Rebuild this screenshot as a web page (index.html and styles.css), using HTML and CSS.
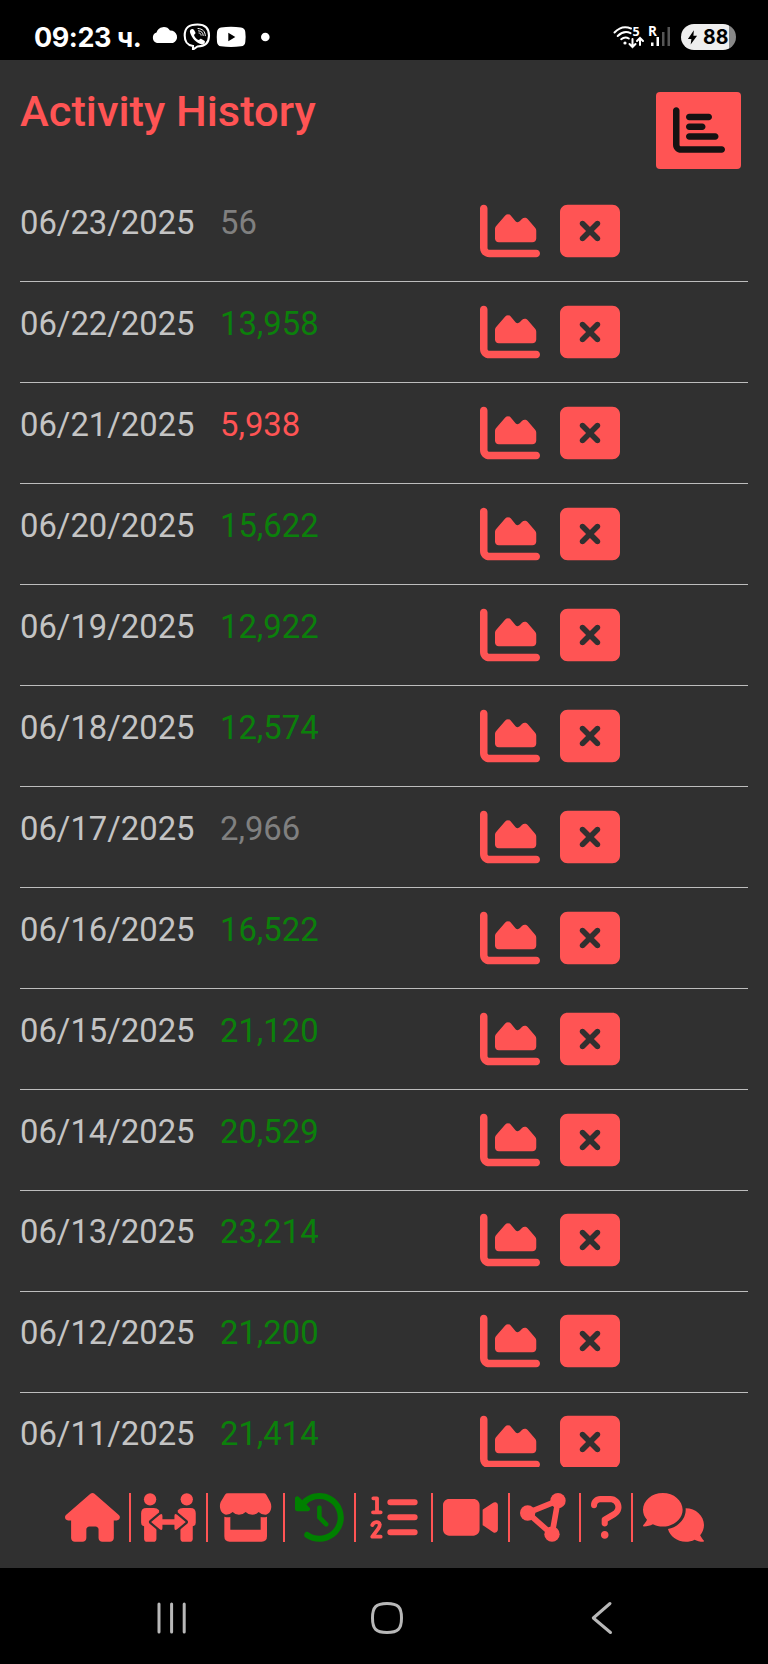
FILE: index.html
```html
<!DOCTYPE html>
<html lang="en">
<head>
<meta charset="utf-8">
<title>Activity History</title>
<link rel="stylesheet" href="styles.css">
</head>
<body>
<svg class="defs" aria-hidden="true">
  <symbol id="area" viewBox="0 0 512 512"><path d="M64 64c0-17.7-14.3-32-32-32S0 46.3 0 64V400c0 44.2 35.8 80 80 80H480c17.7 0 32-14.3 32-32s-14.3-32-32-32H80c-8.8 0-16-7.2-16-16V64zm96 288H448c17.7 0 32-14.3 32-32V251.800c0-7.600-2.700-15-7.700-20.800l-65.800-76.800c-12.100-14.200-33.700-15-46.900-1.800l-21 21c-10 10-26.400 9.200-35.400-1.600l-39.200-47c-12.600-15.100-35.700-15.400-48.700-.6L135.900 215c-5.100 5.800-7.900 13.300-7.900 21.100v84c0 17.700 14.300 32 32 32z"/></symbol>
  <symbol id="close" viewBox="0 0 512 512"><path d="M64 32C28.700 32 0 60.700 0 96V416c0 35.300 28.700 64 64 64H448c35.300 0 64-28.700 64-64V96c0-35.300-28.700-64-64-64H64zM175 175c9.400-9.400 24.600-9.400 33.900 0l47 47 47-47c9.400-9.400 24.600-9.400 33.900 0s9.400 24.600 0 33.900l-47 47 47 47c9.400 9.400 9.400 24.600 0 33.900s-24.600 9.400-33.900 0l-47-47-47 47c-9.400 9.400-24.600 9.400-33.900 0s-9.400-24.600 0-33.900l47-47-47-47c-9.400-9.400-9.400-24.600 0-33.900z"/></symbol>
</svg>
<header class="status">
  <span class="clock">09:23 ч.</span>
  <svg class="status-left" viewBox="0 0 120 30">
    <path fill="#fff" d="M6 23a5.500 5.500 0 0 1-.5-10.500A7.500 7.500 0 0 1 19 10.500a6.500 6.500 0 0 1 3 12.500z"/>
    <path fill="none" stroke="#fff" stroke-width="2.100" d="M46.500 4.500c8 0 11.500 3.500 11.500 11S54.500 26.500 46.500 26.500l-4.500 3V26c-6-1-8.300-4-8.300-10.500C33.700 7.500 38 4.500 46.500 4.500z"/>
    <path fill="#fff" d="M41 9c-2 .5-2.500 2-1.800 4 2 5.600 5.500 9.300 11 11.200 1.800.6 3-.4 3.700-2 .4-1-.2-1.500-3.900-3.400-1-.5-1.500 1.300-2.500 1.200-2-.7-4-2.800-4.500-5 .2-1 2-1.300 1.400-2.600C43.500 10.500 42.500 8.700 41 9z"/>
    <path fill="none" stroke="#fff" stroke-width="1" stroke-linecap="round" d="M47 8.500c4.600.2 7.300 3 7.300 7.200M47.500 10.800c3 .2 4.600 1.900 4.700 4.700M48 13c1.400.1 2 .9 2.100 2.200"/>
    <path fill="#fff" fill-rule="evenodd" d="M70 7.500Q80 6 90 7.500Q94 8 94.300 12Q95 17 94.300 22Q94 26 90 26.300Q80 27.500 70 26.300Q66.500 26 66 22Q65.500 17 66 12Q66.500 8 70 7.500zM77.300 12.800v8.400l7-4.200z"/>
    <circle cx="114.300" cy="17" r="4.300" fill="#fff"/>
  </svg>
  <svg class="status-right" viewBox="0 0 60 30">
    <g fill="none" stroke="#fff" stroke-width="2" stroke-linecap="round">
      <path d="M1.500 12.500Q9 4.500 18 8.500M4.700 16Q11 10 17.500 13.200M8.200 19.200Q12 16 15.800 18.500"/>
      <path d="M19.500 19v8m-3-3 3 3 3-3M27 25v-7m-3 3 3-3 3 3"/>
    </g>
    <circle cx="12" cy="23" r="1.600" fill="#fff"/>
    <text class="tiny" x="19.500" y="16">5</text>
    <text class="tiny tiny-r" x="35" y="15.700">R</text>
    <path fill="#fff" d="M38 22.500h2.500V26H38zM43.500 17h2.500v9h-2.500z"/>
    <path fill="#555" d="M49 12h2.500v14H49zM54.500 7h2.500v19h-2.500z"/>
  </svg>
  <div class="battery">
    <svg class="bolt" viewBox="0 0 12 18"><path d="M7.500 1 1 10.500h3.800L4 16.500 11 7H7z"/></svg>
    <span>88</span>
  </div>
</header>
<main class="app">
  <div class="head">
    <h1>Activity History</h1>
    <button class="chart-btn" aria-label="Chart"><svg viewBox="0 0 512 512"><path d="M32 32c17.700 0 32 14.300 32 32V400c0 8.800 7.200 16 16 16H480c17.700 0 32 14.300 32 32s-14.300 32-32 32H80c-44.200 0-80-35.800-80-80V64C0 46.300 14.300 32 32 32zm96 96c0-17.700 14.300-32 32-32h192c17.700 0 32 14.300 32 32s-14.300 32-32 32H160c-17.700 0-32-14.300-32-32zm32 64H288c17.700 0 32 14.300 32 32s-14.300 32-32 32H160c-17.700 0-32-14.300-32-32s14.300-32 32-32zm0 96H416c17.700 0 32 14.300 32 32s-14.300 32-32 32H160c-17.700 0-32-14.300-32-32s14.300-32 32-32z"/></svg></button>
  </div>
  <div class="list">
    <div class="row"><span>06/23/2025</span><span class="idle">56</span><svg><use href="#area"/></svg><svg><use href="#close"/></svg></div>
    <div class="row"><span>06/22/2025</span><span class="good">13,958</span><svg><use href="#area"/></svg><svg><use href="#close"/></svg></div>
    <div class="row"><span>06/21/2025</span><span class="low">5,938</span><svg><use href="#area"/></svg><svg><use href="#close"/></svg></div>
    <div class="row"><span>06/20/2025</span><span class="good">15,622</span><svg><use href="#area"/></svg><svg><use href="#close"/></svg></div>
    <div class="row"><span>06/19/2025</span><span class="good">12,922</span><svg><use href="#area"/></svg><svg><use href="#close"/></svg></div>
    <div class="row"><span>06/18/2025</span><span class="good">12,574</span><svg><use href="#area"/></svg><svg><use href="#close"/></svg></div>
    <div class="row"><span>06/17/2025</span><span class="idle">2,966</span><svg><use href="#area"/></svg><svg><use href="#close"/></svg></div>
    <div class="row"><span>06/16/2025</span><span class="good">16,522</span><svg><use href="#area"/></svg><svg><use href="#close"/></svg></div>
    <div class="row"><span>06/15/2025</span><span class="good">21,120</span><svg><use href="#area"/></svg><svg><use href="#close"/></svg></div>
    <div class="row"><span>06/14/2025</span><span class="good">20,529</span><svg><use href="#area"/></svg><svg><use href="#close"/></svg></div>
    <div class="row"><span>06/13/2025</span><span class="good">23,214</span><svg><use href="#area"/></svg><svg><use href="#close"/></svg></div>
    <div class="row"><span>06/12/2025</span><span class="good">21,200</span><svg><use href="#area"/></svg><svg><use href="#close"/></svg></div>
    <div class="row"><span>06/11/2025</span><span class="good">21,414</span><svg><use href="#area"/></svg><svg><use href="#close"/></svg></div>
  </div>
  <nav class="tabs">
    <a class="w576"><svg viewBox="0 0 576 512"><path d="M575.800 255.500c0 18-15 32.100-32 32.100h-32l.7 160.200c0 2.700-.2 5.400-.5 8.100V472c0 22.100-17.900 40-40 40H456c-1.100 0-2.200 0-3.300-.1c-1.400 .1-2.800 .1-4.200 .1H416 392c-22.100 0-40-17.900-40-40V448 384c0-17.700-14.300-32-32-32H256c-17.700 0-32 14.300-32 32v64 24c0 22.100-17.900 40-40 40H160 128.100c-1.500 0-3-.1-4.500-.2c-1.200 .1-2.400 .2-3.600 .2H104c-22.100 0-40-17.900-40-40V360c0-.9 0-1.900 .1-2.800V287.600H32c-18 0-32-14-32-32.100c0-9 3-17 10-24L266.400 8c7-7 15-8 22-8s15 2 21 7L564.800 231.500c8 7 12 15 11 24z"/></svg></a>
    <a class="w576"><svg viewBox="303.700 68 164.700 146.400">
      <circle cx="331" cy="87" r="18.500"/><circle cx="441" cy="87" r="18.500"/>
      <path d="M320 113H342Q352 113 358 120V160H350V205Q350 214.400 341 214.400H322Q313 214.400 313 205V168Q304 166 304 157V129Q304 113 320 113z"/>
      <path d="M452 113H430Q420 113 414 120V160H422V205Q422 214.400 431 214.400H450Q459 214.400 459 205V168Q468 166 468 157V129Q468 113 452 113z"/>
      <path class="arrow-gap" d="M334 155 360 133Q368 128 368 137V147H404V137Q404 128 412 133L438 155 412 177Q404 182 404 173V163H368V173Q368 182 360 177z"/>
      <path d="M334 155 360 133Q368 128 368 137V147H404V137Q404 128 412 133L438 155 412 177Q404 182 404 173V163H368V173Q368 182 360 177z"/></svg></a>
    <a class="w576"><svg viewBox="534 68 164.700 146.400"><path d="M563 69H671Q676 69 679 73L691 95C698 110 692 131 676 133Q663 133 656 125Q648 133 637 133Q624 133 617 125Q609 133 597 133Q585 133 578 125Q570 133 558 133C542 131 536 110 542 95L555 73Q558 69 563 69zM553 139Q562 142 571 140V178H662V140Q672 142 681 139V198Q681 214.400 665 214.400H569Q553 214.400 553 198z"/></svg></a>
    <a class="w512 active"><svg viewBox="0 0 512 512"><path d="M75 75L41 41C25.900 25.900 0 36.600 0 57.900V168c0 13.300 10.700 24 24 24H134.100c21.400 0 32.100-25.900 17-41l-30.800-30.800C155 85.500 203 64 256 64c106 0 192 86 192 192s-86 192-192 192c-40.800 0-78.600-12.700-109.700-34.400c-14.500-10.100-34.400-6.600-44.600 7.900s-6.600 34.400 7.900 44.600C151.200 495 201.700 512 256 512c141.400 0 256-114.600 256-256S397.400 0 256 0C185.300 0 121.300 28.700 75 75zm181 53c-13.300 0-24 10.700-24 24V256c0 6.400 2.500 12.500 7 17l72 72c9.400 9.400 24.600 9.400 33.900 0s9.400-24.600 0-33.900l-65-65V152c0-13.300-10.700-24-24-24z"/></svg></a>
    <a class="w576"><svg class="line" viewBox="286 68 164.700 146.400"><path stroke-width="18" d="M359 96H432M359 141H432M359 186H432"/><path stroke-width="11.500" d="M308 84H319V126M307 126H330M305 164C309 154 326 152 327 162C328 169 325 173 305 199H330"/></svg></a>
    <a class="w576"><svg viewBox="0 0 576 512"><path d="M0 128C0 92.700 28.700 64 64 64H320c35.300 0 64 28.700 64 64V384c0 35.300-28.700 64-64 64H64c-35.300 0-64-28.700-64-64V128zM559.100 99.800c10.400 5.600 16.900 16.400 16.900 28.200V384c0 11.800-6.500 22.600-16.900 28.200s-23 5-32.900-1.600l-96-64L416 337.100V320 192 174.900l14.200-9.500 96-64c9.800-6.500 22.400-7.200 32.900-1.600z"/></svg></a>
    <a class="w512"><svg viewBox="57 68 146.400 146.400"><path class="link" d="M80 128 171 91 153 192z"/><circle cx="80" cy="128" r="23"/><circle cx="171" cy="91" r="23"/><circle cx="153" cy="191.500" r="23"/></svg></a>
    <a class="w320"><svg viewBox="0 0 320 512"><path d="M204.300 32H96c-52.900 0-96 43.100-96 96c0 17.700 14.300 32 32 32s32-14.300 32-32c0-17.600 14.300-32 32-32h108.300C232.800 96 256 119.200 256 147.800c0 19.700-11 37.500-30.500 47.300L127.800 252.400C117.100 258.200 112 268.700 112 280v40c0 17.700 14.300 32 32 32s32-14.300 32-32V298.300L256 251.300c39.500-19.800 64-59.400 64-103.500C320 84 268.100 32 204.300 32zM144 400c-22.100 0-40 17.900-40 40s17.900 40 40 40s40-17.900 40-40S166.100 400 144 400z"/></svg></a>
    <a class="w640"><svg viewBox="0 0 640 512"><path d="M416 176C416 78.800 322.900 0 208 0S0 78.800 0 176c0 39.600 15.600 76 41.700 105.400c-16.400 32.800-39.200 57.300-39.600 57.700c-2.100 2.200-2.700 5.500-1.400 8.400C1.900 350.300 4.600 352 7.700 352c38.300 0 70.700-11.100 95.700-24C134.200 343.100 169.800 352 208 352C322.900 352 416 273.200 416 176zM599.600 443.700C624.800 413.900 640 376.600 640 336C640 238.800 554 160 448 160h-.9C447.500 165.300 448 170.600 448 176c0 98.600-79.700 181.200-186.100 202.500C282.700 455.100 357.100 512 448 512c33.700 0 65.300-8 92.900-22C565.200 502 596.100 512 632.300 512c3.100 0 5.800-1.700 7-4.600c1.200-2.900 .7-6.100-1.400-8.400C637.600 498.700 615.900 475.300 599.600 443.700z"/></svg></a>
  </nav>
</main>
<footer class="system">
  <svg class="recents" viewBox="0 0 32 34"><path d="M2 3V31M14.600 3V31M27.200 3V31"/></svg>
  <svg class="home" viewBox="0 0 34 34"><path d="M17 2.500C28 2.500 31.500 6 31.500 17S28 31.500 17 31.500 2.500 28 2.500 17 6 2.500 17 2.500z"/></svg>
  <svg class="back" viewBox="0 0 22 34"><path d="M19 2.500 2.300 17 19.500 31.500"/></svg>
</footer>
</body>
</html>
```
FILE: styles.css
```css
* { box-sizing: border-box; }
body { margin: 0; width: 768px; height: 1664px; display: flex; flex-direction: column; background: #000; font-family: Roboto, sans-serif; overflow: hidden; }
svg { display: block; fill: currentColor; }
.defs { position: absolute; width: 0; height: 0; }

.status { height: 60px; flex: none; display: flex; align-items: flex-start; padding: 20px 32px 0 34px; color: #fff; }
.clock { width: 117px; font: 700 27px/36px Inter, sans-serif; letter-spacing: -0.45px; white-space: nowrap; }
.status-left { width: 120px; height: 30px; }
.status-right { width: 60px; height: 30px; margin-left: auto; margin-right: 8px; }
.tiny { font: 700 12.500px "Open Sans", sans-serif; fill: #fff; }
.tiny-r { font-size: 13.500px; }
.battery { width: 55px; height: 26px; margin-top: 4px; padding-left: 6px; display: flex; align-items: center; gap: 5px; border-radius: 13px; background: linear-gradient(to right, #eee 48px, #888 48px); color: #000; font: 700 19.500px/26px Inter, sans-serif; }
.bolt { width: 11px; height: 17px; }

.app { height: 1508px; flex: none; display: flex; flex-direction: column; background: #303030; color: #ff5454; }
.head { height: 121px; flex: none; display: flex; justify-content: space-between; align-items: flex-start; padding: 31.500px 27px 0 20px; }
h1 { margin: -5.500px 0 0; font-size: 43.400px; line-height: 52px; font-weight: 500; }
.chart-btn { width: 85px; height: 77.500px; padding: 0; display: grid; place-items: center; border: 0; border-radius: 4px; background: #ff5454; color: #161212; }
.chart-btn svg { width: 52px; height: 52px; }

.list { height: 1285.500px; flex: none; margin: 0 20px; overflow: hidden; }
.row { height: 100.970px; display: grid; grid-template-columns: 200px 260px 60px 60px; column-gap: 0; border-bottom: 1px solid #bdbdbd; padding-top: 19.800px; font-size: 32.800px; line-height: 45px; color: #c4c4c4; }
.row svg { width: 60px; height: 60px; color: #ff5454; }
.row svg:last-child { margin-left: 19.500px; }
.row .good { color: #0b800b; }
.row .idle { color: #808080; }
.row .low { color: #ff5454; }

.tabs { display: flex; padding: 26.300px 0 0 54.500px; }
.tabs a { height: 49px; padding: 0 10px; flex: none; box-sizing: content-box; border-right: 2px solid #ff5454; }
.tabs a:last-child { border-right: 0; }
.tabs svg { width: 100%; height: 48.800px; overflow: visible; }
.tabs .w320 { width: 30.500px; }
.tabs .w512 { width: 48.800px; }
.tabs .w576 { width: 54.900px; }
.tabs .w640 { width: 61px; }
.tabs .active svg { color: #008000; }
.arrow-gap { stroke: #303030; stroke-width: 13; stroke-linejoin: round; }
.line { fill: none; stroke: currentColor; stroke-linecap: round; stroke-linejoin: round; }
.link { fill: none; stroke: currentColor; stroke-width: 17; }

.system { height: 96px; flex: none; display: flex; justify-content: space-between; padding: 33px 155px 0 156.500px; }
.system svg { height: 34px; fill: none; stroke: #b8b8b8; stroke-width: 3; stroke-linecap: round; stroke-linejoin: round; }
.recents { width: 32px; }
.home { width: 34px; margin-right: 6px; }
.back { width: 22px; }
```
